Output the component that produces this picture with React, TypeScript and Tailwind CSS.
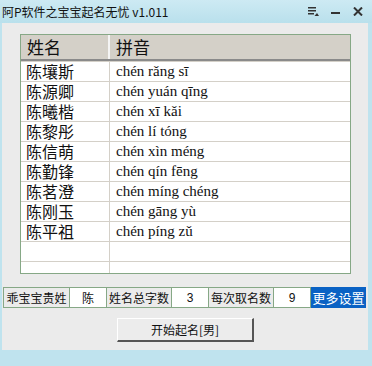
import React from "react";

const rows = [
  ["陈壤斯", "chén rǎng sī"],
  ["陈源卿", "chén yuán qīng"],
  ["陈曦楷", "chén xī kǎi"],
  ["陈黎彤", "chén lí tóng"],
  ["陈信萌", "chén xìn méng"],
  ["陈勤锋", "chén qín fēng"],
  ["陈茗澄", "chén míng chéng"],
  ["陈刚玉", "chén gāng yù"],
  ["陈平祖", "chén píng zǔ"],
  ["", ""],
  ["", ""],
];

const cjk = { fontFamily: '"Noto Sans CJK SC", "Noto Sans", sans-serif' };
const serif = { fontFamily: '"Liberation Serif", serif' };

export default function App() {
  return (
    <div className="w-[372px] h-[366px] bg-[#bfe3ee] flex flex-col overflow-hidden" style={cjk}>
      {/* title bar */}
      <div className="h-[23px] flex items-center pl-[2px] pr-[9px] bg-gradient-to-b from-[#cdeaf3] to-[#b9e0ec]">
        <span className="text-[12px] text-[#111] leading-none">阿P软件之宝宝起名无忧 v1.011</span>
        <div className="ml-auto flex items-center gap-[12px]">
          <svg width="11" height="9" viewBox="0 0 11 9">
            <rect x="0" y="0" width="8" height="1.5" fill="#333" />
            <rect x="0" y="3" width="8" height="1.5" fill="#333" />
            <rect x="0" y="6" width="6" height="1.5" fill="#333" />
            <path d="M6.5 9 L9 6 L11 9 Z" fill="#333" />
          </svg>
          <svg width="10" height="9" viewBox="0 0 10 9">
            <rect x="0" y="5" width="9" height="2" fill="#333" />
          </svg>
          <svg width="10" height="9" viewBox="0 0 10 9">
            <path d="M1 0.5 L9 8.5 M9 0.5 L1 8.5" stroke="#333" strokeWidth="2" />
          </svg>
        </div>
      </div>

      {/* body */}
      <div className="ml-[2px] mr-[4px] h-[327px] bg-[#ebebeb] flex flex-col">
        <div className="ml-[18px] mt-[11px] w-[331px] h-[240px] border border-[#86a886] bg-white flex flex-col overflow-hidden">
          <div className="flex h-[26px] bg-[#d4d0c8] border-b-2 border-[#8a8a8a] shrink-0">
            <div className="w-[89px] border-r-2 border-r-[#f4f4f4] pl-[6px] text-[17px] leading-[23px] text-[#111]">姓名</div>
            <div className="flex-1 pl-[6px] text-[17px] leading-[23px] text-[#111]">拼音</div>
          </div>
          {rows.map((r, i) => (
            <div key={i} className="flex h-[20px] border-t border-[#d4d0c8] shrink-0">
              <div className="w-[89px] border-r border-[#d4d0c8] pl-[5px] text-[16px] leading-[19px] text-[#111]">{r[0]}</div>
              <div className="flex-1 pl-[6px] text-[15px] leading-[19px] text-[#111]" style={serif}>{r[1]}</div>
            </div>
          ))}
        </div>

        <div className="mt-[13px] ml-[1px] flex h-[21px] text-[12px] text-[#111]">
          <div className="w-[67px] border border-[#86a886] flex items-center justify-center bg-[#ebebeb]">乖宝宝贵姓</div>
          <div className="w-[37px] border border-l-0 border-[#86a886] flex items-center justify-center bg-white">陈</div>
          <div className="w-[65px] border border-l-0 border-[#86a886] flex items-center justify-center bg-[#ebebeb]">姓名总字数</div>
          <div className="w-[37px] border border-l-0 border-[#86a886] flex items-center justify-center bg-white" style={{ fontFamily: '"Liberation Sans", sans-serif' }}>3</div>
          <div className="w-[65px] border border-l-0 border-[#86a886] flex items-center justify-center bg-[#ebebeb]">每次取名数</div>
          <div className="w-[37px] border border-l-0 border-[#86a886] flex items-center justify-center bg-white" style={{ fontFamily: '"Liberation Sans", sans-serif' }}>9</div>
          <div className="w-[55px] flex items-center justify-center bg-[#0a62c4] text-white text-[13px]">更多设置</div>
        </div>

        <div className="mt-[10px] ml-[115px] w-[137px] h-[24px] bg-[#ececec] border-t border-l border-t-white border-l-white border-r-2 border-b-2 border-r-[#555] border-b-[#555] flex items-center justify-center text-[12px] text-[#111]">
          开始起名[男]
        </div>
      </div>
    </div>
  );
}
